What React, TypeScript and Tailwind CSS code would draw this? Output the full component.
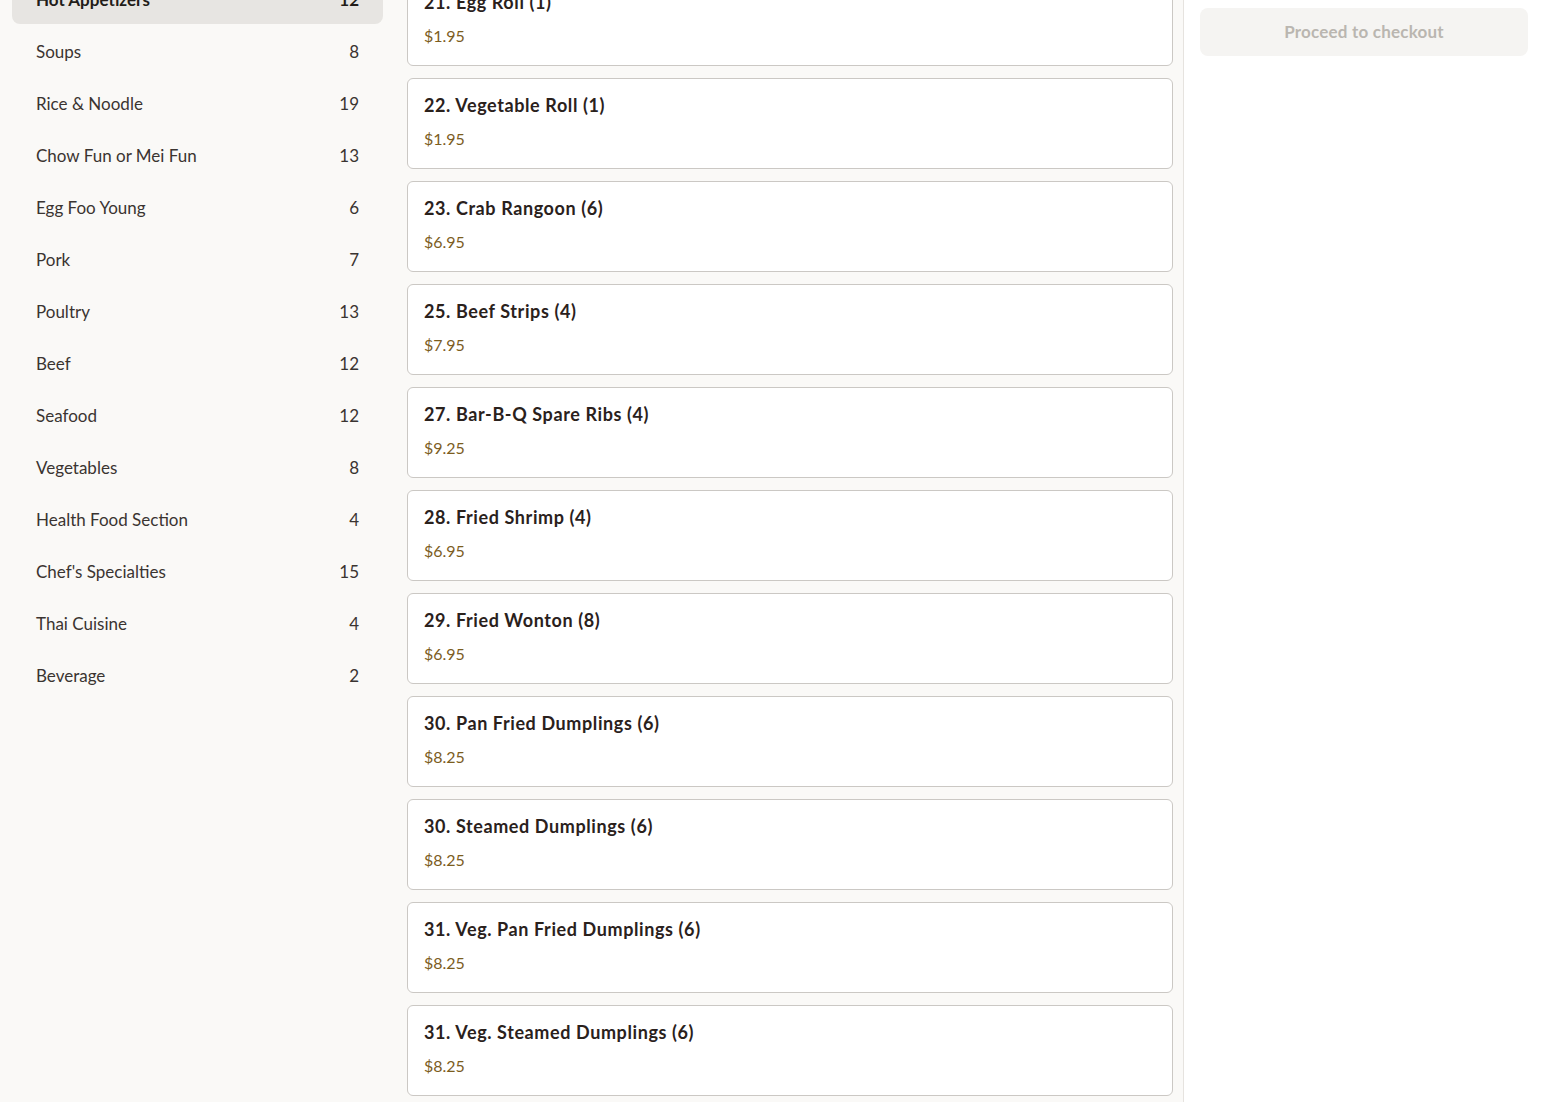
import React from "react";

const categories: Array<[string, number]> = [
  ["Hot Appetizers", 12],
  ["Soups", 8],
  ["Rice & Noodle", 19],
  ["Chow Fun or Mei Fun", 13],
  ["Egg Foo Young", 6],
  ["Pork", 7],
  ["Poultry", 13],
  ["Beef", 12],
  ["Seafood", 12],
  ["Vegetables", 8],
  ["Health Food Section", 4],
  ["Chef's Specialties", 15],
  ["Thai Cuisine", 4],
  ["Beverage", 2],
];

const items: Array<[string, string]> = [
  ["21. Egg Roll (1)", "$1.95"],
  ["22. Vegetable Roll (1)", "$1.95"],
  ["23. Crab Rangoon (6)", "$6.95"],
  ["25. Beef Strips (4)", "$7.95"],
  ["27. Bar-B-Q Spare Ribs (4)", "$9.25"],
  ["28. Fried Shrimp (4)", "$6.95"],
  ["29. Fried Wonton (8)", "$6.95"],
  ["30. Pan Fried Dumplings (6)", "$8.25"],
  ["30. Steamed Dumplings (6)", "$8.25"],
  ["31. Veg. Pan Fried Dumplings (6)", "$8.25"],
  ["31. Veg. Steamed Dumplings (6)", "$8.25"],
  ["32. Shrimp Dumplings (6)", "$8.95"],
];

export default function App() {
  return (
    <div
      className="flex h-[1102px] w-full overflow-hidden bg-[#faf9f7] text-[#2b2420]"
      style={{ fontFamily: "Lato, 'Noto Sans', sans-serif" }}
    >
      {/* category sidebar */}
      <aside className="w-[395px] shrink-0 px-3">
        <nav className="-mt-[24px] flex flex-col gap-1">
          {categories.map(([name, count], i) => {
            const active = i === 0;
            return (
              <div
                key={name}
                className={
                  active
                    ? "flex h-12 items-center justify-between rounded-lg bg-[#e7e5e2] px-6 text-[17px] font-bold text-[#221c18]"
                    : "flex h-12 items-center justify-between rounded-lg px-6 text-[17px] text-[#3a3431]"
                }
              >
                <span>{name}</span>
                <span>{count}</span>
              </div>
            );
          })}
        </nav>
      </aside>

      {/* menu items */}
      <main className="w-[789px] shrink-0 border-r border-[#e6e3df] pl-3 pr-[10px]">
        <div className="-mt-[25px] flex flex-col gap-3">
          {items.map(([title, price]) => (
            <div
              key={title}
              className="flex h-[91px] flex-col rounded-md border border-[#cbc8c4] bg-white px-4 pt-[14px]"
            >
              <div className="text-[18px] font-bold leading-6 tracking-[0.6px] text-[#2a211c]">{title}</div>
              <div className="mt-[10px] text-[16px] leading-6 text-[#7c5d1e]">{price}</div>
            </div>
          ))}
        </div>
      </main>

      {/* cart */}
      <section className="flex-1 bg-white px-4 pt-2">
        <button className="h-12 w-full rounded-lg bg-[#f5f4f2] text-[17px] font-bold tracking-[0.2px] text-[#bab6b0]">
          Proceed to checkout
        </button>
      </section>
    </div>
  );
}
